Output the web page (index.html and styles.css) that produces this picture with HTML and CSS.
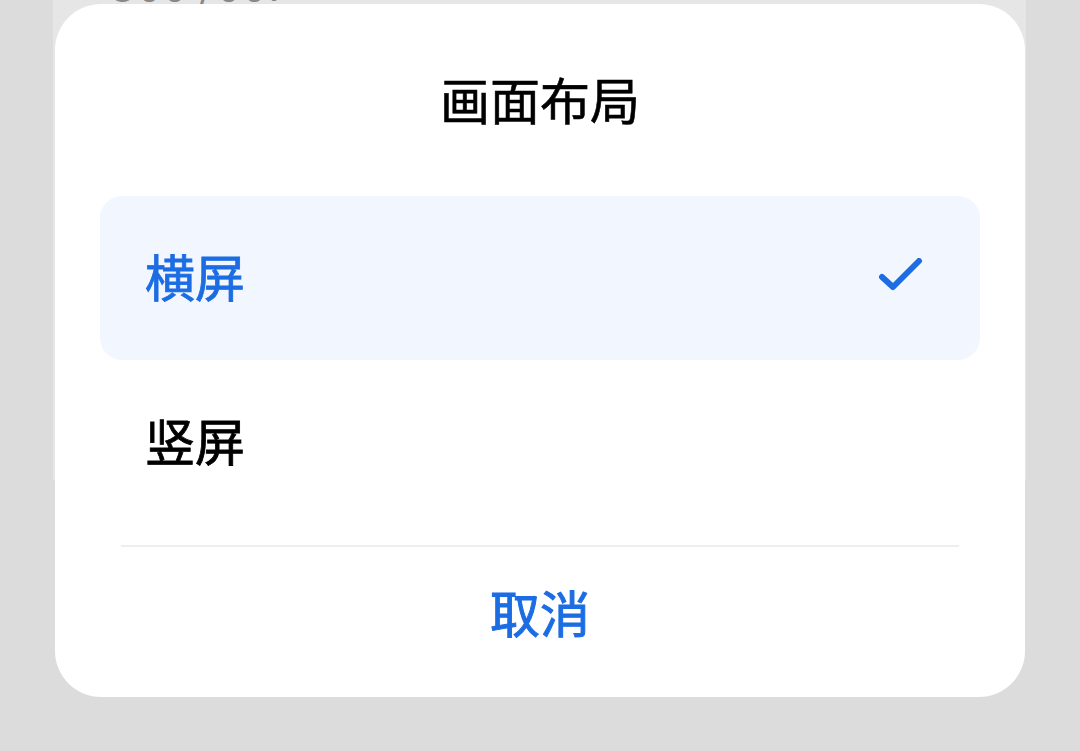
FILE: index.html
```html
<!DOCTYPE html>
<html lang="zh-CN">
  <head>
    <meta charset="UTF-8" />
    <meta name="viewport" content="width=device-width, initial-scale=1.0" />
    <title>画面布局</title>
    <link rel="stylesheet" href="styles.css">
  </head>
  <body>
    <div class="screen">
      <div class="sheet">
        <span class="sheet-text">500 /00f</span>
      </div>

      <div class="dialog">
        <div class="dialog-title">画面布局</div>

        <div class="option-list">
          <div class="option option-selected">
            <span class="option-label">横屏</span>
            <svg class="option-check" width="48" height="40" viewBox="0 0 48 40">
              <path d="M5 19 L16 29 L42 3" fill="none" stroke="currentColor" stroke-width="6" stroke-linecap="round" stroke-linejoin="round" />
            </svg>
          </div>
          <div class="option">
            <span class="option-label">竖屏</span>
          </div>
        </div>

        <div class="divider"></div>

        <div class="cancel">取消</div>
      </div>
    </div>
  </body>
</html>
```

FILE: styles.css
```css
:root {
  --blue: #1c6de3;
}
html,
body {
  margin: 0;
  height: 100%;
  background: #dcdcdc;
  font-family: "Noto Sans CJK SC", "Noto Sans", sans-serif;
}
.screen {
  position: relative;
  height: 100%;
  overflow: hidden;
}
.sheet {
  position: absolute;
  top: -40px;
  left: 53px;
  width: 973px;
  height: 520px;
  background: #e6e6e6;
}
.sheet-text {
  position: absolute;
  top: -2px;
  left: 58px;
  font-size: 46px;
  line-height: 46px;
  color: #888;
}
.dialog {
  position: relative;
  margin: 4px 0 0 55px;
  width: 970px;
  height: 693px;
  background: #fff;
  border-radius: 46px;
  display: flex;
  flex-direction: column;
}
.dialog-title {
  padding-top: 64px;
  line-height: 60px;
  font-size: 50px;
  font-weight: 400;
  -webkit-text-stroke: 0.6px currentColor;
  text-align: center;
  color: #000;
}
.option-list {
  margin: 68px 45px 0;
  display: flex;
  flex-direction: column;
}
.option {
  height: 164px;
  display: flex;
  align-items: center;
  justify-content: space-between;
  padding: 0 55px 0 45px;
  border-radius: 22px;
  color: #000;
}
.option-selected {
  background: #f2f6fe;
  color: var(--blue);
}
.option-label {
  font-size: 50px;
  font-weight: 400;
  -webkit-text-stroke: 0.8px currentColor;
  line-height: 60px;
  margin-top: -6px;
}
.option-check {
  color: var(--blue);
  margin-top: -1px;
}
.divider {
  margin: 21px 66px 0;
  height: 2px;
  background: #eeeeee;
}
.cancel {
  height: 128px;
  display: flex;
  align-items: center;
  justify-content: center;
  font-size: 50px;
  font-weight: 400;
  -webkit-text-stroke: 1px currentColor;
  color: var(--blue);
}
```
